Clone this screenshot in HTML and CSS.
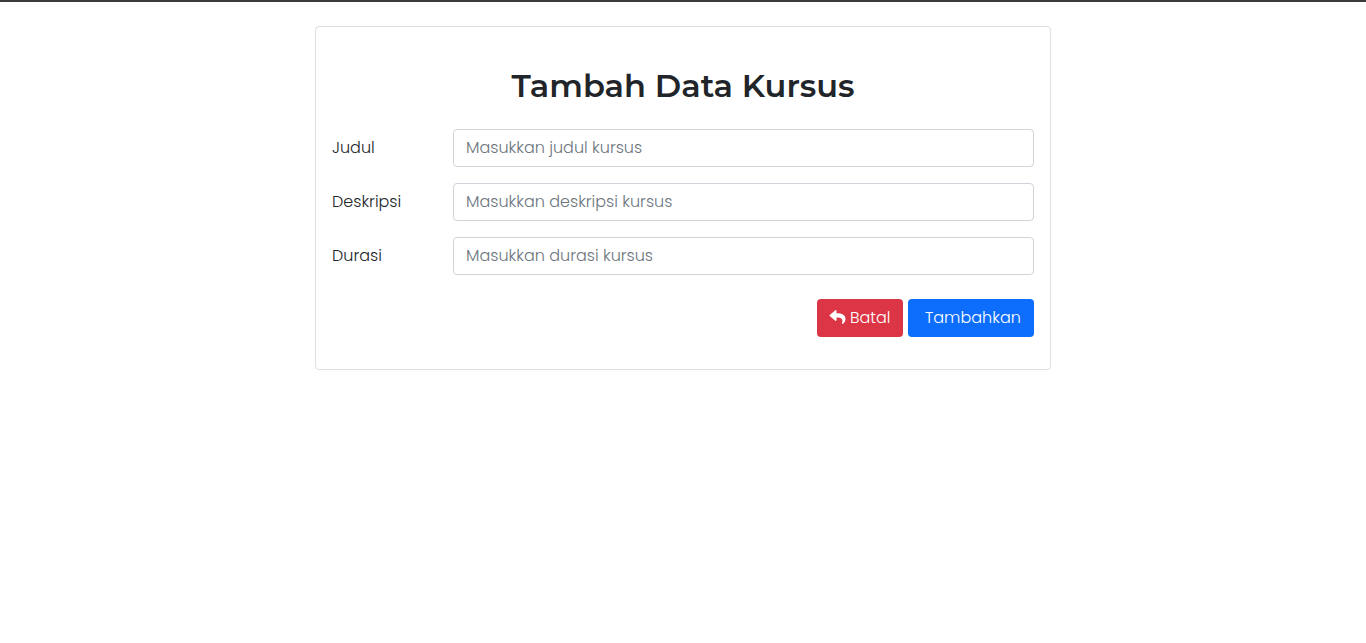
FILE: index.html
```html
<!DOCTYPE html>
<html lang="id">
<head>
<meta charset="utf-8">
<title>Tambah Data Kursus</title>
<link rel="stylesheet" href="styles.css">
</head>
<body>
<main class="card">
  <h2 class="title"><span class="title-text">Tambah Data Kursus</span></h2>
  <form class="form">
    <div class="row">
      <label class="label label-judul" for="judul">Judul</label>
      <input class="input input-judul" id="judul" type="text" placeholder="Masukkan judul kursus">
    </div>
    <div class="row">
      <label class="label label-deskripsi" for="deskripsi">Deskripsi</label>
      <input class="input input-deskripsi" id="deskripsi" type="text" placeholder="Masukkan deskripsi kursus">
    </div>
    <div class="row">
      <label class="label label-durasi" for="durasi">Durasi</label>
      <input class="input input-durasi" id="durasi" type="text" placeholder="Masukkan durasi kursus">
    </div>
    <div class="actions">
      <a class="btn btn-danger" href="#"><svg class="icon" viewBox="0 0 512 512" aria-hidden="true"><path fill="currentColor" d="M8.309 189.836L184.313 37.851C199.719 24.546 224 35.347 224 56.015v80.053c160.629 1.839 288 34.032 288 186.258 0 61.441-39.581 122.309-83.333 154.132-13.653 9.931-33.111-2.533-28.077-18.631 45.344-145.012-21.507-183.51-176.59-185.742V360c0 20.7-24.3 31.453-39.687 18.164l-176.004-152c-11.071-9.562-11.086-26.753 0-36.328z"/></svg><span class="btn-text">Batal</span></a>
      <button class="btn btn-primary" type="button"><span class="btn-text">Tambahkan</span></button>
    </div>
  </form>
</main>
</body>
</html>
```
FILE: styles.css
```css
* { box-sizing: border-box; }
body {
  margin: 0;
  min-height: 643px;
  padding-top: 24px;
  border-top: 2px solid #3c3a3c;
  background: #fff;
  color: #212529;
  font: 300 16px/24px Poppins, Inter, sans-serif;
}
.card {
  width: 736px;
  height: 344px;
  margin: 0 auto;
  padding: 40px 16px 0;
  border: 1px solid #dfdfdf;
  border-radius: 4px;
}
.title {
  margin: 0 0 24px;
  font: 600 32px/38px Montserrat, Inter, sans-serif;
  text-align: center;
}
.form { display: flex; flex-direction: column; gap: 16px; }
.row { display: grid; grid-template-columns: 121px 1fr; height: 38px; }
.label { padding-top: 7px; }
.input {
  width: 100%;
  padding: 6px 12px;
  border: 1px solid #ced4da;
  border-radius: 4px;
  background: #fff;
  font: inherit;
}
.input::placeholder { color: #6c757d; opacity: 1; }
.actions { display: flex; justify-content: flex-end; gap: 5px; margin-top: 8px; }
.btn {
  display: flex;
  align-items: center;
  height: 38px;
  padding: 0 12px;
  border: 0;
  border-radius: 4px;
  color: #fff;
  font: inherit;
  text-decoration: none;
}
.btn-danger { width: 86px; gap: 4px; background: #dc3545; }
.btn-primary { width: 126px; padding-left: 17px; background: #0d6efd; }
.icon { width: 17px; height: 16px; margin-bottom: 2px; flex: none; }
```
